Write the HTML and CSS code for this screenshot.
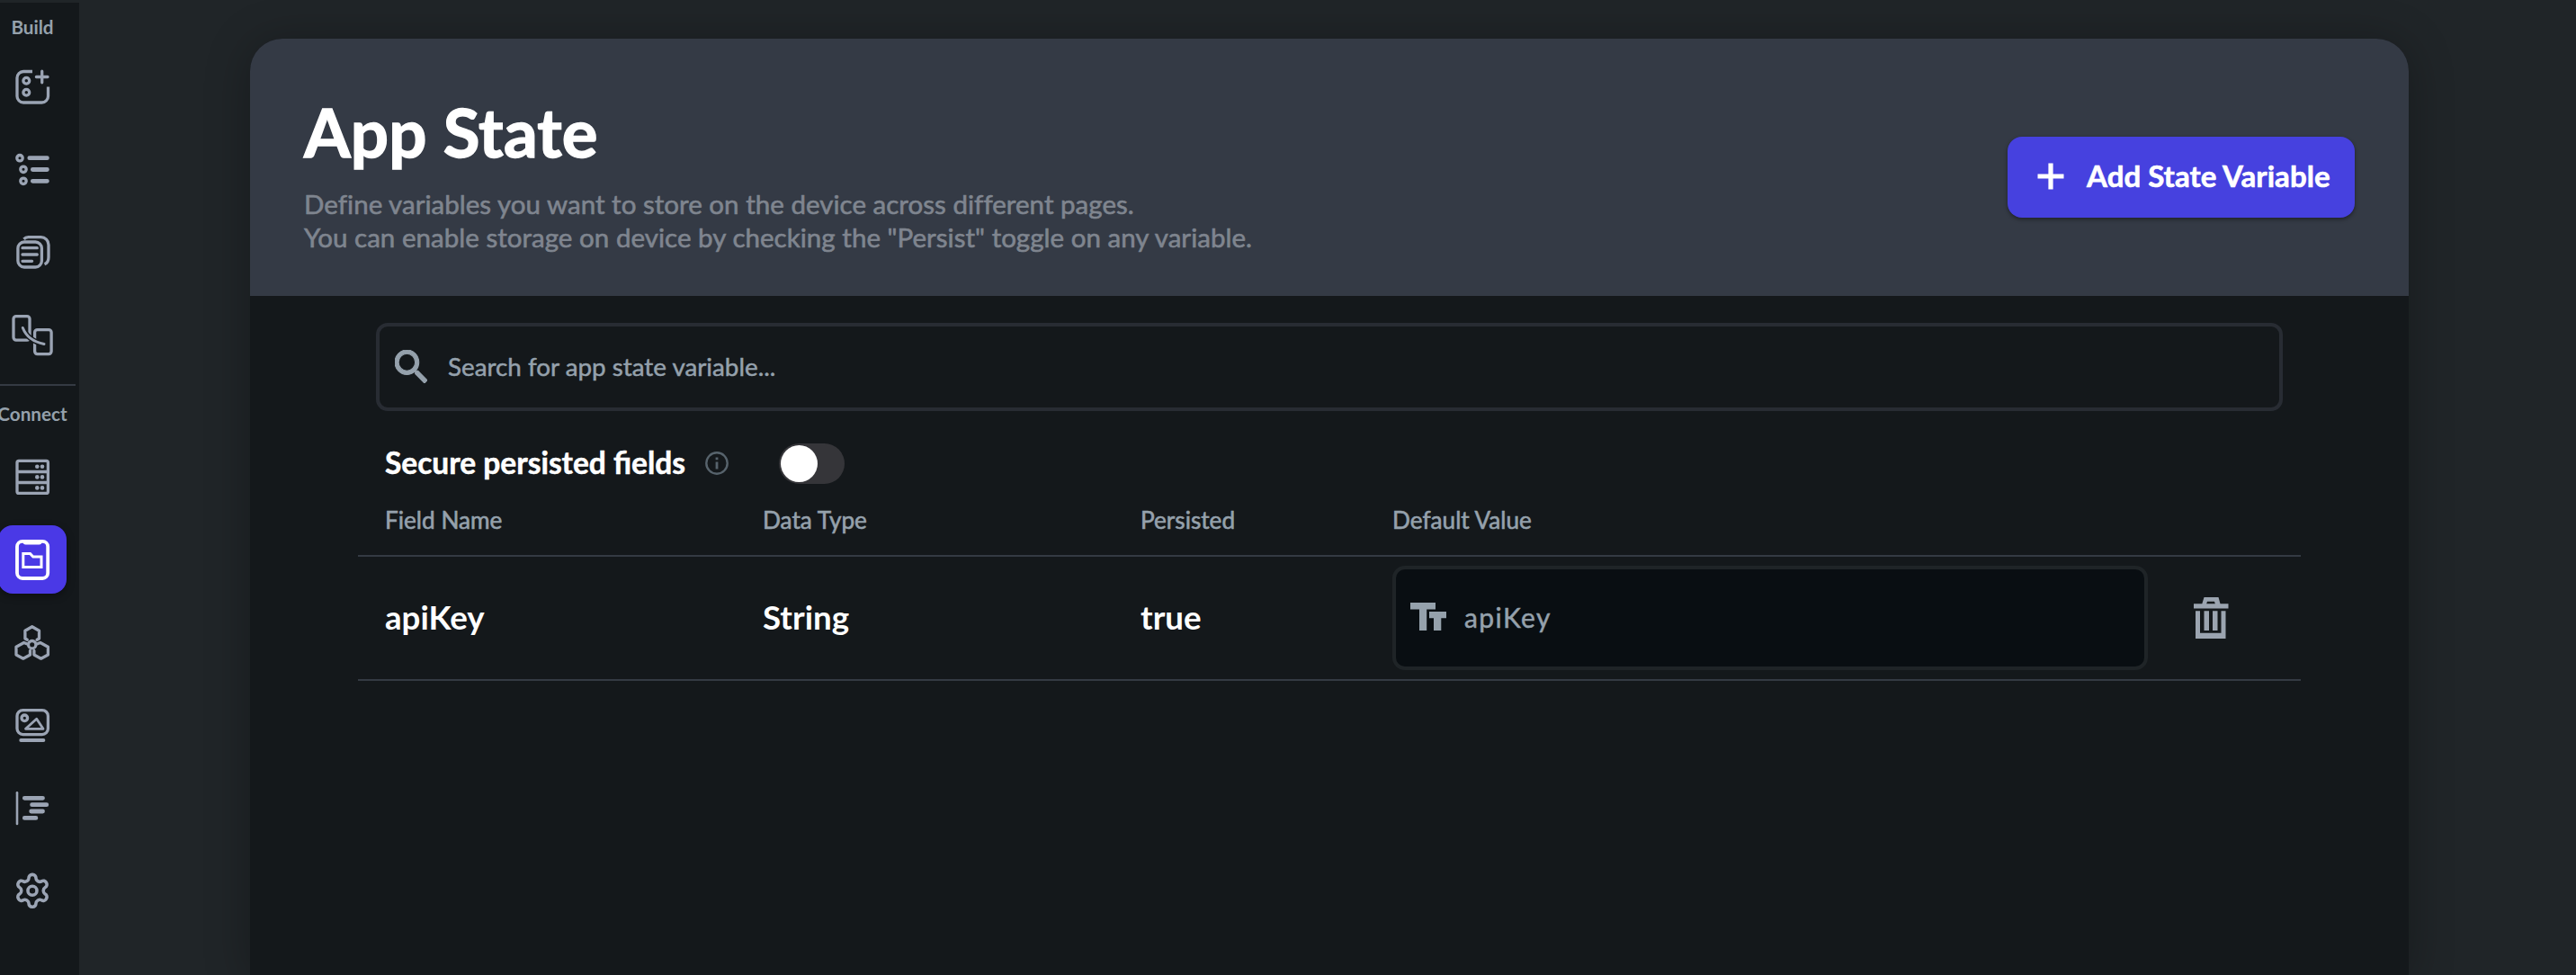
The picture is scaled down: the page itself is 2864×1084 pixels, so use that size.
FILE: index.html
```html
<!DOCTYPE html>
<html lang="en">
<head>
<meta charset="utf-8">
<title>App State</title>
<link rel="stylesheet" href="styles.css">
</head>
<body>
<nav class="sidebar">
  <div class="nav-label">Build</div>
  <a class="nav-item"><svg viewBox="0 0 76 76"><path d="M38 21.5H28a7 7 0 0 0-7 7V49a7 7 0 0 0 7 7h20.500a7 7 0 0 0 7-7V38.500"/><path d="M48.700 21.200v12.600M42.400 27.500h12.600" stroke-linecap="round"/><circle cx="31.300" cy="31.700" r="3.400"/><circle cx="31.300" cy="44.700" r="3.400"/></svg></a>
  <a class="nav-item"><svg viewBox="0 0 76 76"><circle cx="24" cy="25.700" r="3.200"/><circle cx="28" cy="38.300" r="3.200"/><circle cx="28" cy="51.300" r="3.200"/><path class="bar" d="M34.800 25.700h19.600M38.300 38.500h16.100M38.300 51.300h16.100"/></svg></a>
  <a class="nav-item"><svg viewBox="0 0 76 76"><rect x="21.900" y="27" width="26.500" height="28" rx="7"/><path d="M28.500 23.800c1.300-1.500 3-2.100 5-2.100h14a8.500 8.500 0 0 1 8.500 8.500V44c0 4-1.200 6.500-4.500 7.700"/><path d="M27 33.700h16.300M27 41h16.300M27 48.300h10.600" stroke-linecap="round"/></svg></a>
  <a class="nav-item"><svg viewBox="0 0 76 76"><rect x="17" y="17.600" width="18" height="26.500" rx="3"/><rect x="40.600" y="32.600" width="18.500" height="27" rx="3"/><path class="halo" d="M27.300 30.500Q33 45 51 48.500"/><path d="M27.300 30.500Q33 45 51 48.500" stroke-width="3" stroke-linecap="round"/></svg></a>
  <div class="nav-divider"></div>
  <div class="nav-label connect">Connect</div>
  <a class="nav-item"><svg viewBox="0 0 76 76"><rect x="21" y="20.400" width="34.400" height="36" rx="2"/><path d="M21 32.500h34.400M21 44.500h34.400"/><g class="solid"><circle cx="43.300" cy="26.700" r="2.300"/><circle cx="49" cy="26.700" r="2.300"/><circle cx="43.300" cy="38.400" r="2.300"/><circle cx="49" cy="38.400" r="2.300"/><circle cx="43.300" cy="50.400" r="2.300"/><circle cx="49" cy="50.400" r="2.300"/></g></svg></a>
  <a class="nav-item"><span class="selected"><svg viewBox="0 0 76 76"><rect x="21" y="17.800" width="34.200" height="41.200" rx="6" stroke-width="3.800"/><path class="solid" d="M27.500 16.500h21v2c0 1.800-1.200 3-3 3h-15c-1.800 0-3-1.200-3-3z"/><path d="M27.800 31.500h7.700l3.300 3.600h9.200V46.500H27.800z" stroke-width="3"/></svg></span></a>
  <a class="nav-item"><svg viewBox="0 0 76 76"><path stroke-linecap="round" stroke-linejoin="round" d="M32.300 35.300 29.900 34V25.200l7.800-4.500 7.800 4.500V34l-2.400 1.300M31.700 39.800 28.600 38.500 20 43.300v8.700l7.800 4.200 7.700-4.200v-4.500M43.700 39.800l3.100-1.300 8.600 4.800v8.700l-7.800 4.200-7.700-4.200v-4.500"/><circle cx="37.700" cy="40.700" r="4.200"/></svg></a>
  <a class="nav-item"><svg viewBox="0 0 76 76"><rect x="21" y="21.600" width="34.400" height="27" rx="6.500"/><circle cx="29.300" cy="30.300" r="3.300"/><path d="M42.700 31.200 50 42.300H30.500z" stroke-width="2.800" stroke-linejoin="round"/><path d="M25.200 55h25.200" stroke-width="3.800" stroke-linecap="round"/></svg></a>
  <a class="nav-item"><svg viewBox="0 0 76 76"><path d="M21 21.200v34.700" stroke-width="2.600" stroke-linecap="round"/><path class="bar" d="M29.300 27.300h20.200M37.600 34.700h16.200M36.700 42h12.800M29.300 49.400h12.600"/></svg></a>
  <a class="nav-item"><svg viewBox="0 0 76 76"><g transform="translate(16.500 16.800) scale(1.790)" stroke-width="2"><path d="M12.220 2h-.440a2 2 0 0 0-2 2v.180a2 2 0 0 1-1 1.730l-.430.250a2 2 0 0 1-2 0l-.150-.080a2 2 0 0 0-2.730.730l-.220.380a2 2 0 0 0 .730 2.730l.150.100a2 2 0 0 1 1 1.720v.510a2 2 0 0 1-1 1.740l-.150.090a2 2 0 0 0-.730 2.730l.220.380a2 2 0 0 0 2.730.730l.150-.080a2 2 0 0 1 2 0l.430.250a2 2 0 0 1 1 1.730V20a2 2 0 0 0 2 2h.440a2 2 0 0 0 2-2v-.180a2 2 0 0 1 1-1.730l.430-.250a2 2 0 0 1 2 0l.150.080a2 2 0 0 0 2.730-.730l.220-.390a2 2 0 0 0-.730-2.730l-.150-.080a2 2 0 0 1-1-1.740v-.500a2 2 0 0 1 1-1.740l.150-.090a2 2 0 0 0 .730-2.730l-.220-.380a2 2 0 0 0-2.730-.730l-.150.080a2 2 0 0 1-2 0l-.430-.250a2 2 0 0 1-1-1.730V4a2 2 0 0 0-2-2z"/><circle cx="12" cy="12" r="2.800"/></g></svg></a>
</nav>
<main class="main">
  <section class="card">
    <header class="card-header">
      <div>
        <h1 class="title">App State</h1>
        <p class="desc"><span class="line-one">Define variables you want to store on the device across different pages.</span><br>You can enable storage on device by checking the "Persist" toggle on any variable.</p>
      </div>
      <button class="add-button"><svg width="32" height="32" viewBox="0 0 32 32"><path d="M16 1.500v29M1.500 16h29" stroke="#fff" stroke-width="5.200"/></svg><span>Add State Variable</span></button>
    </header>
    <div class="content">
      <label class="search"><svg width="36" height="37" viewBox="3 3 17.500 17.500" preserveAspectRatio="none"><path fill="#95a1ac" stroke="#95a1ac" stroke-width=".5" d="M15.500 14h-.790l-.280-.270A6.471 6.471 0 0 0 16 9.500 6.500 6.500 0 1 0 9.500 16c1.610 0 3.090-.590 4.230-1.570l.270.280v.790l5 4.990L20.490 19l-4.990-5zm-6 0C7.010 14 5 11.990 5 9.500S7.010 5 9.500 5 14 7.010 14 9.500 11.990 14 9.500 14z"/></svg><span>Search for app state variable...</span></label>
      <div class="secure">
        <span class="secure-label">Secure persisted fields</span>
        <svg class="info" width="26" height="26" viewBox="0 0 26 26"><circle cx="13" cy="13" r="11.700" fill="none" stroke="#57636c" stroke-width="2.400"/><path fill="#57636c" d="M11.600 11.500h2.800v8h-2.800zM11.600 6.500h2.800v2.800h-2.800z"/></svg>
        <span class="toggle"><span class="knob"></span></span>
      </div>
      <div class="row head">
        <span>Field Name</span><span>Data Type</span><span>Persisted</span><span>Default Value</span>
      </div>
      <div class="row data">
        <span>apiKey</span><span>String</span><span>true</span>
        <div class="field"><svg width="40" height="32" viewBox="0 0 40 32"><path fill="#95a1ac" d="M0 0h28v7.500H18.200V31H10V7.500H0zM21 10h19v7.300h-5.700V31H26V17.300h-5z"/></svg><span>apiKey</span></div>
        <div class="remove"><svg width="40" height="48" viewBox="0 0 40 48"><path fill="#9ba4b0" fill-rule="evenodd" d="M12.500 1h16l2 7.300H39.500v5.200H1V8.300h9.300zM16 5.800l-.800 2.500h9.600L24 5.800zM3 16.200h5v24.600h23.500V16.200h5V47H3zM12.500 16.200H18V38h-5.500zM22 16.200h5.500V38H22z"/></svg></div>
      </div>
    </div>
  </section>
</main>
</body>
</html>
```
FILE: styles.css
```css
* { box-sizing: border-box; }
body {
  margin: 0;
  height: 1084px;
  display: flex;
  overflow: hidden;
  background: #202528;
  font-family: Lato, sans-serif;
  color: #fff;
}
svg { display: block; flex: none; }

.sidebar {
  width: 88px;
  flex: none;
  margin-top: 3px;
  padding-top: 11px;
  background: #14181b;
}
.nav-label {
  width: 72px;
  height: 32px;
  line-height: 32px;
  margin-bottom: 4px;
  display: flex;
  justify-content: center;
  white-space: nowrap;
  font-size: 20.7px;
  font-weight: 700;
  color: #95a1ac;
}
.connect { margin: 15px 0 8px; }
.nav-item {
  width: 72px;
  height: 92px;
  display: flex;
  align-items: center;
  justify-content: center;
}
.nav-item svg {
  width: 76px;
  height: 76px;
  fill: none;
  stroke: #9ba4b4;
  stroke-width: 3.3;
}
.nav-item .bar { stroke-width: 4.8; stroke-linecap: round; }
.nav-item .halo { stroke: #14181b; stroke-width: 6; }
.nav-item .solid { fill: #9ba4b4; stroke: none; }
.nav-divider { width: 84px; height: 2px; margin-top: 9px; background: #343a43; }
.selected {
  flex: none;
  border-radius: 16px;
  background: #4a39e6;
  box-shadow: 0 3px 8px rgba(0, 0, 0, .35);
}
.selected svg { stroke: #fff; }
.nav-item .selected .solid { fill: #fff; }

.main { flex: 1; height: 1084px; padding: 43px 186px 0 190px; }
.card {
  height: 1041px;
  border-radius: 36px 36px 0 0;
  background: #14181b;
  box-shadow: 0 4px 50px rgba(0, 0, 0, .28);
}
.card-header {
  height: 286px;
  padding: 59px 60px 0;
  display: flex;
  align-items: flex-start;
  justify-content: space-between;
  border-radius: 36px 36px 0 0;
  background: #343a45;
}
.title {
  margin: 0 0 17px;
  font-size: 74.4px;
  line-height: 89px;
  font-weight: 700;
  letter-spacing: .15px;
  -webkit-text-stroke: 1.4px #fff;
}
.desc {
  margin: 0;
  font-size: 29.5px;
  line-height: 37px;
  letter-spacing: .03px;
  color: #7f858f;
  -webkit-text-stroke: .6px #7f858f;
}
.line-one { letter-spacing: .02px; }
.add-button {
  width: 386px;
  height: 90px;
  margin-top: 50px;
  padding: 0 0 2px 32px;
  display: flex;
  align-items: center;
  gap: 24px;
  border: 0;
  border-radius: 16px;
  background: #4641df;
  box-shadow: 0 2px 4px rgba(0, 0, 0, .4);
  color: #fff;
  font: 700 33.1px Lato, sans-serif;
  white-space: nowrap;
  -webkit-text-stroke: .6px #fff;
}
.add-button span { padding-bottom: 2px; }

.content { padding: 30px 120px 0; }
.search {
  height: 98px;
  margin: 0 20px;
  padding: 0 17px 2px;
  display: flex;
  align-items: center;
  gap: 23px;
  border: 4px solid #282c33;
  border-radius: 13px;
  font-size: 27.8px;
  color: #95a1ac;
  -webkit-text-stroke: .5px #95a1ac;
}
.secure {
  height: 44px;
  margin: 36px 0 0 30px;
  display: flex;
  align-items: center;
}
.secure-label {
  padding-bottom: 3px;
  font-size: 33.5px;
  font-weight: 700;
  -webkit-text-stroke: .5px #fff;
}
.info { margin: 0 56px 0 22px; }
.toggle {
  width: 73px;
  height: 45px;
  padding: 2px;
  border-radius: 23px;
  background: #353539;
}
.knob { display: block; width: 41px; height: 41px; border-radius: 50%; background: #fff; }

.row {
  display: grid;
  grid-template-columns: 420px 420px 280px 840px 1fr;
  align-items: center;
  padding-left: 30px;
  border-bottom: 2px solid #343a43;
}
.head {
  height: 82px;
  padding-top: 2px;
  font-size: 26.2px;
  color: #95a1ac;
  -webkit-text-stroke: .6px #95a1ac;
}
.data { height: 138px; font-size: 36.7px; font-weight: 700; }
.data > span { padding-bottom: 2px; }
.field {
  height: 116px;
  padding: 0 16px 3px;
  display: flex;
  align-items: center;
  gap: 20px;
  border: 4px solid #1f2427;
  border-radius: 14px;
  background: #090e12;
  font-size: 30px;
  font-weight: 400;
  letter-spacing: 1.4px;
  color: #95a1ac;
  -webkit-text-stroke: .5px #95a1ac;
}
.remove { padding-left: 50px; -webkit-text-stroke: 0; }
```
